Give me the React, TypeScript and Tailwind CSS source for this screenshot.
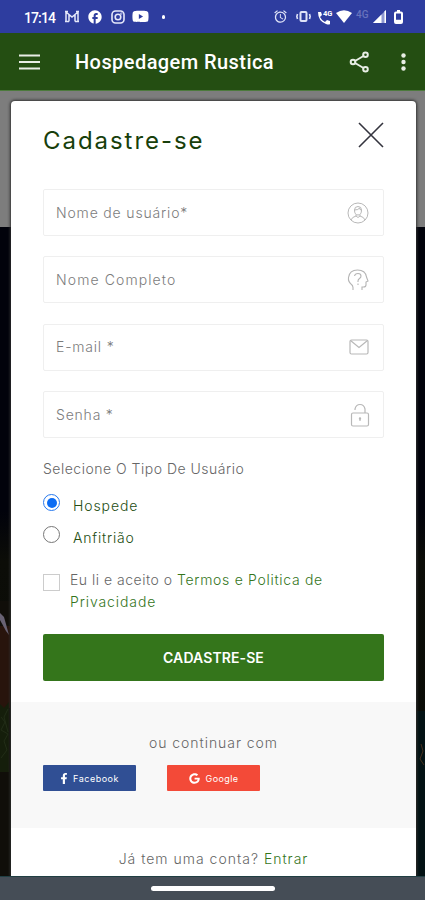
import type { ReactNode } from 'react';
import { FaFacebookF, FaGoogle, FaYoutube } from 'react-icons/fa';
import { MdAlarm, MdFacebook } from 'react-icons/md';

function StatusBar() {
  return (
    <div className="flex h-[33px] shrink-0 items-center bg-[#2e3d9f] pl-6 text-white">
      <span className="w-[40px] pt-[2px] font-[Roboto] text-[14px] font-medium leading-none tracking-[-0.9px]">17:14</span>
      <svg className="h-[13px] w-4" viewBox="0 0 16 13" fill="none" stroke="#e5e8fa">
        <path d="M2 11.500V2l6 5 6-5v9.500M5 11.500V5M11 11.500V5M1 11.500h4m6 0h4M1 1.500h3m8 0h3" strokeWidth="1.500" />
      </svg>
      <MdFacebook className="ml-[7px] h-[16px] w-[16px]" />
      <svg className="ml-[8px] h-[14px] w-[14px]" viewBox="0 0 14 14" fill="none" stroke="#e5e8fa" strokeWidth="1.600">
        <rect x="1" y="1" width="12" height="12" rx="3.500" />
        <circle cx="7" cy="7" r="2.800" />
        <circle cx="10.300" cy="3.700" r=".3" />
      </svg>
      <FaYoutube className="ml-[7px] h-[17px] w-[17px]" />
      <span className="ml-[13px] h-[4px] w-[3px] rounded-full bg-white" />
      <MdAlarm className="ml-[108px] h-[15px] w-[15px] text-[#dfe3f8]" />
      <svg className="ml-[8px] h-[13px] w-[15px]" viewBox="0 0 15 13" fill="none" stroke="#dfe3f8" strokeWidth="2">
        <rect x="4.500" y="2" width="6" height="9" rx="1" />
        <path d="M1.500 4 .8 6.500 1.500 9M13.500 4l.7 2.500-.7 2.500" strokeWidth="1.600" />
      </svg>
      <svg className="ml-[6px] h-[16px] w-4 overflow-visible" viewBox="0 0 16 16" fill="white">
        <path d="M1 3h3l1 3-2 2q2 4 5 5l2-2 3 1v3q-1 1-4 0Q1 12 1 3" />
        <text x="6" y="7" fontSize="7.500" fontWeight="700" fontFamily="Roboto">4G</text>
      </svg>
      <svg className="ml-[3px] h-[13px] w-[16px]" viewBox="0 0 16 13" fill="white">
        <path d="M0 3Q8-2.500 16 3L8 13z" />
      </svg>
      <span className="ml-[4px] w-[15px] pb-1 font-[Roboto] text-[10px] font-medium leading-none text-[#6873bd]">4G</span>
      <svg className="ml-[2px] h-[13px] w-[13px]" viewBox="0 0 13 13">
        <path d="M13 0v13H0z" fill="#8f99d2" />
        <path d="M8.500 4.500V13H0z" fill="white" />
        <path d="M13 0v13h-1.500V1.500z" fill="white" />
      </svg>
      <svg className="ml-[8px] h-[14px] w-[9px]" viewBox="0 0 9 14" fill="none" stroke="white" strokeWidth="2">
        <path d="M3 1h3" />
        <rect x="1" y="2.500" width="7" height="10.500" rx="1" />
        <path d="M1 11h7" strokeWidth="2.500" />
      </svg>
    </div>
  );
}

function AppBar() {
  return (
    <header className="flex h-[57px] shrink-0 items-center bg-[#244e12] text-white">
      <svg className="ml-[19px] h-[16px] w-[21px]" viewBox="0 0 21 16" stroke="#e8eee5" strokeWidth="2">
        <path d="M0 1.500h21M0 8h21M0 14.500h21" />
      </svg>
      <h1 className="ml-[35px] w-[274px] whitespace-nowrap pt-px font-[Roboto] text-[20px] font-medium leading-6 tracking-[0.43px]">Hospedagem Rustica</h1>
      <svg className="h-[22px] w-[21px]" viewBox="0 0 21 22" fill="none" stroke="#e8eee5" strokeWidth="2">
        <path d="m6 10 8.500-5M6 12l8.500 5" />
        <circle cx="4" cy="11" r="2.300" />
        <circle cx="16.500" cy="3.700" r="2.300" />
        <circle cx="16.500" cy="18.300" r="2.300" />
      </svg>
      <svg className="ml-[31px] h-[20px] w-[6px]" viewBox="0 0 6 20" fill="#e8eee5">
        <circle cx="2.500" cy="3.500" r="2.200" />
        <circle cx="2.500" cy="10" r="2.200" />
        <circle cx="2.500" cy="16.500" r="2.200" />
      </svg>
    </header>
  );
}

function Field({ label, spacing, children }: { label: string; spacing: string; children: ReactNode }) {
  return (
    <div className="flex h-[47px] items-center justify-between rounded-[2px] border border-[#efefef] pl-3">
      <span className={`whitespace-nowrap text-[14px] font-light leading-5 text-[#7c7c7c] ${spacing}`}>{label}</span>
      {children}
    </div>
  );
}

function Fields() {
  return (
    <div className="mt-[30px] flex flex-col gap-[20.4px]">
      <Field label="Nome de usuário*" spacing="tracking-[0.83px]">
        <svg className="mr-[14px] h-[22px] w-[22px]" viewBox="0 0 22 22" fill="none" stroke="#b8b8b8">
          <circle cx="11" cy="11" r="10" />
          <path d="M4 18q1-3 5-4v-1.500M18 18q-1-3-5-4v-1.500M9 14l2 1.500 2-1.500" />
          <path d="M7.500 8q0-3.500 3.500-3.500T14.500 8q0 5-3.500 5T7.500 8q4 0 5-2 0 2 2 2" />
        </svg>
      </Field>
      <Field label="Nome Completo" spacing="tracking-[1.1px]">
        <svg className="mr-[14px] h-[24px] w-[22px]" viewBox="0 0 22 24" fill="none" stroke="#b5b5b5" strokeWidth="1.100">
          <path d="M6 22v-2.500q0-2-2-3.500Q1 13.500 1.500 9.500 2.500 2 10.500 2q8 0 9 7l1.500 4-2 1v3q0 2-2.500 2H15v3" />
          <path d="M7.500 8q.5-2.500 3.500-2.500t3 2.500q0 1.500-1.500 2.500T11 13v1M11 15.500v1.500" />
        </svg>
      </Field>
      <Field label="E-mail *" spacing="tracking-[0.8px]">
        <svg className="mr-[14px] h-[16px] w-[20px]" viewBox="0 0 20 16" fill="none" stroke="#b8b8b8" strokeWidth="1.200">
          <rect x="1" y="1" width="18" height="14" rx="1.500" />
          <path d="m1.500 1.500 8.500 7 8.500-7" />
        </svg>
      </Field>
      <Field label="Senha *" spacing="tracking-[0.8px]">
        <svg className="mr-[13px] h-[24px] w-[20px]" viewBox="0 0 20 24" fill="none" stroke="#b8b8b8" strokeWidth="1.200">
          <rect x="1.500" y="10" width="17" height="13" rx="1.500" />
          <path d="M5 7V6q1-4.500 5-4.500T15 6v4M10 15v3" />
          <circle cx="10" cy="15.500" r=".6" />
        </svg>
      </Field>
    </div>
  );
}

function UserType() {
  return (
    <div>
      <p className="mt-[21px] whitespace-nowrap text-[14px] font-light leading-5 tracking-[0.5px] text-[#666]">Selecione O Tipo De Usuário</p>
      <div className="mt-[15px] flex h-8 gap-[13px]">
        <span className="flex h-[17px] w-[17px] items-center justify-center rounded-full border-[1.500px] border-[#2678ee]">
          <span className="h-[10px] w-[10px] rounded-full bg-[#0b6cf3]" />
        </span>
        <span className="pt-[2px] text-[14px] font-light leading-5 tracking-[0.9px] text-[#244e12]">Hospede</span>
      </div>
      <div className="flex h-8 gap-[13px]">
        <span className="h-[17px] w-[17px] rounded-full border border-[#777]" />
        <span className="pt-[2px] text-[14px] font-light leading-5 tracking-[0.8px] text-[#244e12]">Anfitrião</span>
      </div>
    </div>
  );
}

function Terms() {
  return (
    <div className="mt-[11px] flex gap-[10px]">
      <span className="mt-[5px] h-[17px] w-[17px] shrink-0 border border-[#ccc]" />
      <p className="whitespace-nowrap text-[14px] font-light leading-[22px] tracking-[0.5px] text-[#666]">
        Eu li e aceito o <span className="tracking-[0.7px] text-[#34751b]">Termos e Politica de</span>
        <br />
        <span className="tracking-[0.9px] text-[#34751b]">Privacidade</span>
      </p>
    </div>
  );
}

function SocialLogin() {
  return (
    <div className="mt-[21px] h-[126px] bg-[#f8f8f8] px-8 pt-[31px]">
      <p className="text-center text-[14px] font-light leading-5 tracking-[0.95px] text-[#666]">ou continuar com</p>
      <div className="mt-[12px] flex gap-[31px] text-white">
        <button className="flex h-[26px] w-[93px] items-center justify-center gap-[5px] rounded-[1px] bg-[#304f94]">
          <FaFacebookF className="h-[11px] w-[8px]" />
          <span className="text-[9px] leading-none tracking-[0.5px]">Facebook</span>
        </button>
        <button className="flex h-[26px] w-[93px] items-center justify-center gap-[6px] rounded-[1px] bg-[#f34a38]">
          <FaGoogle className="h-[11px] w-[11px]" />
          <span className="text-[9px] leading-none tracking-[0.4px]">Google</span>
        </button>
      </div>
    </div>
  );
}

export default function App() {
  return (
    <div className="flex h-[900px] w-[425px] flex-col overflow-hidden bg-[#03060c] font-[Inter,sans-serif]">
      <StatusBar />
      <AppBar />
      <main className="relative h-[786px] shrink-0 overflow-hidden border-t border-[#4c7a3c] bg-[linear-gradient(#7d7d7d_136px,#01020b_136px,#01020b_420px,#0c0d08_470px,#080b05_785px)] pl-[11px] pr-[9px] pt-[10px]">
        {/* Darkened photo that stays visible beside the dialog */}
        <svg className="absolute left-0 top-[510px] h-[276px] w-[10px]" viewBox="0 0 10 276">
          <path d="M0 0h10v276H0z" fill="#100e09" />
          <path d="M0 25h10v82H0z" fill="#28140c" />
          <path d="m0 12 4 4 5 18-3-4-6-11z" fill="#686273" />
          <path d="M0 103l4 4 5-6v70H0z" fill="#151e0b" />
          <path d="m1 116 4 5-4 8 7 4-4 7 3 9-6 8m7-49-4 8 4 15" fill="none" stroke="#222d17" />
        </svg>
        <svg className="absolute right-0 top-[620px] h-[166px] w-[8px]" viewBox="0 0 8 166">
          <path d="M0 0h8v166H0z" fill="#031214" />
          <path d="m4 33 2 7-3 8 4 6" fill="none" stroke="#47301d" />
        </svg>
        <section className="relative h-[775px] overflow-hidden rounded-t-[4px] bg-white shadow-[0_0_3px_1px_#303030]">
          <div className="px-8 pt-[21px]">
            <div className="flex h-[37px] justify-between">
              <h2 className="whitespace-nowrap pt-px text-[24px] leading-9 tracking-[1.950px] text-[#183f0b]">Cadastre-se</h2>
              <svg className="h-[26px] w-[26px]" viewBox="0 0 26 26" stroke="#34343e" strokeWidth="1.600">
                <path d="m1 1 24 24M25 1 1 25" />
              </svg>
            </div>
            <Fields />
            <UserType />
            <Terms />
            <button className="mt-[21px] h-[47px] w-full rounded-[2px] bg-[#34751b] text-[14px] font-semibold tracking-[0.1px] text-white">CADASTRE-SE</button>
          </div>
          <SocialLogin />
          <p className="pt-[21px] text-center text-[14px] font-light leading-5 tracking-[1px] text-[#666]">
            Já tem uma conta? <span className="text-[#34751b]">Entrar</span>
          </p>
        </section>
      </main>
      <div className="flex h-6 shrink-0 justify-center border-t border-[#203f43] bg-[#454d56] pt-[9px]">
        <span className="h-[5px] w-[124px] rounded-full bg-white" />
      </div>
    </div>
  );
}
